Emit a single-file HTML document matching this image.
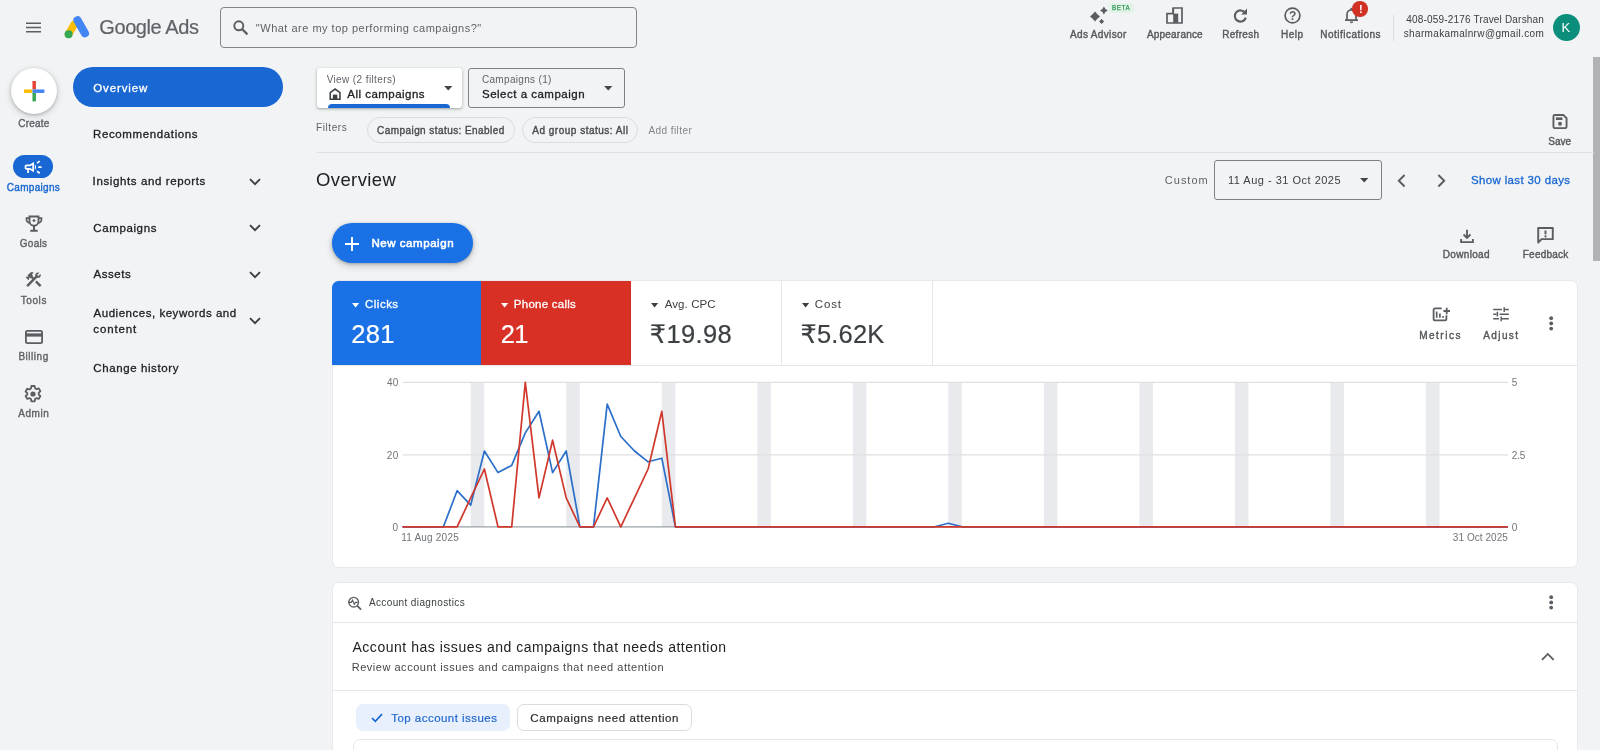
<!DOCTYPE html>
<html lang="en">
<head>
<meta charset="utf-8">
<title>Overview - Google Ads</title>
<style>
*{box-sizing:border-box;margin:0;padding:0}
html,body{width:1600px;height:750px;overflow:hidden;background:#f1f3f4}
body{position:relative;font-family:"Liberation Sans","DejaVu Sans",sans-serif;color:#202124}
.abs{position:absolute}
.t{position:absolute;white-space:nowrap;line-height:1}
svg{position:absolute;overflow:visible}
.chip{border:1px solid #dadce0;border-radius:13px;height:26px;top:117px}
.card{background:#fff;border:1px solid #e7e9ec;border-radius:7px}
.hr{height:1px;background:#e4e6e9}
</style>
</head>
<body>

<!-- ================= HEADER ================= -->
<svg style="left:26.100px;top:22px" width="15" height="11" viewBox="0 0 15 11"><path d="M0 1.250h15M0 5.500h15M0 9.800h15" stroke="#5a5d61" stroke-width="1.450" fill="none"/></svg>
<svg style="left:63px;top:15px" width="28" height="24" viewBox="0 0 28 24">
  <path d="M5.600 19.200 L11.400 9.200" stroke="#fbbc04" stroke-width="7.600" stroke-linecap="round"/>
  <path d="M14.500 5.300 L21.900 18.200" stroke="#4285f4" stroke-width="8.200" stroke-linecap="round"/>
  <circle cx="5.600" cy="19.300" r="4" fill="#34a853"/>
</svg>
<div class="abs" style="left:220px;top:7px;width:417px;height:41px;border:1px solid #80868b;border-radius:4px"></div>
<svg style="left:233px;top:20px" width="16" height="16" viewBox="0 0 16 16"><circle cx="5.800" cy="5.800" r="4.500" stroke="#5a5d61" stroke-width="1.900" fill="none"/><path d="M9.300 9.300L14.400 14.400" stroke="#5a5d61" stroke-width="2.200"/></svg>

<!-- header right icons -->
<svg style="left:1089px;top:7px" width="19" height="18" viewBox="0 0 19 18">
  <path d="M6 4.5Q8.1 7.4 11 9.5Q8.1 11.6 6 14.5Q3.9 11.6 1 9.5Q3.9 7.4 6 4.5Z" fill="#5a5d61"/>
  <path d="M14.9 -0.3999999999999999Q15.9 2.5 18.8 3.5Q15.9 4.5 14.9 7.4Q13.9 4.5 11.0 3.5Q13.9 2.5 14.9 -0.3999999999999999Z" fill="#5a5d61"/>
  <path d="M12.6 11.8Q13.7 13.3 15.2 14.4Q13.7 15.5 12.6 17.0Q11.5 15.5 10.0 14.4Q11.5 13.3 12.6 11.8Z" fill="#5a5d61"/>
</svg>
<div class="abs" style="left:1109px;top:2.500px;width:24.500px;height:10px;background:#e4f3e8;border-radius:3px"></div>
<div class="t" style="left:1112.300px;top:4.600px;font-size:6.300px;will-change:transform;color:#2f9855;letter-spacing:0.600px;-webkit-text-stroke-width:0.250px">BETA</div>
<svg style="left:1166px;top:7px" width="17" height="17" viewBox="0 0 17 17">
  <path d="M7.200 1h8.800v15H1V6.600h6.200z" fill="none" stroke="#5a5d61" stroke-width="1.700"/>
  <path d="M7.200 6.600h5V16H7.200z" fill="#5a5d61"/><path d="M7.200 1v6" stroke="#5a5d61" stroke-width="1.700"/>
</svg>
<svg style="left:1233px;top:8px" width="15" height="15" viewBox="0 0 15 15">
  <path d="M12.300 5.200 A5.600 5.600 0 1 0 12.800 9.600" fill="none" stroke="#5a5d61" stroke-width="2.100"/>
  <path d="M14 0.600V6.400H8.200z" fill="#5a5d61"/>
</svg>
<svg style="left:1284.200px;top:7.200px" width="17" height="17" viewBox="0 0 17 17">
  <circle cx="8.500" cy="8.500" r="7.400" fill="none" stroke="#5a5d61" stroke-width="1.700"/>
</svg>
<div class="t" style="left:1289px;top:9.500px;font-size:12px;font-weight:bold;will-change:transform;color:#5a5d61">?</div>
<svg style="left:1343.500px;top:7.100px" width="15" height="17" viewBox="0 0 15 17">
  <path d="M1 13.200h13M3 13V7.400a4.500 4.500 0 0 1 9 0V13" fill="none" stroke="#5a5d61" stroke-width="1.700"/>
  <path d="M5.800 14.600h3.400a1.700 1.700 0 0 1-3.400 0z" fill="#5a5d61"/><circle cx="7.500" cy="1.900" r="1.200" fill="#5a5d61"/>
</svg>
<div class="abs" style="left:1352.300px;top:1.400px;width:15.600px;height:15.600px;border-radius:50%;background:#d03124"></div>
<div class="t" style="left:1358.500px;top:3.600px;font-size:11px;font-weight:bold;will-change:transform;color:#fff">!</div>
<div class="abs" style="left:1392.500px;top:15px;width:1px;height:26px;background:#dadce0"></div>
<div class="abs" style="left:1553px;top:13.700px;width:27.200px;height:27.200px;border-radius:50%;background:#0b8f7c"></div>
<!-- scrollbar -->
<div class="abs" style="left:1593.200px;top:57px;width:7px;height:204px;background:#b0b2b4"></div>

<!-- ================= LEFT RAIL ================= -->
<div class="abs" style="left:10.800px;top:67.600px;width:46.600px;height:46.600px;border-radius:50%;background:#fff;box-shadow:0 1px 3px rgba(60,64,67,.3),0 2px 6px 1px rgba(60,64,67,.15)"></div>
<svg style="left:23.800px;top:80.600px" width="20.400" height="20.400" viewBox="0 0 20 20">
  <path d="M8.300 0h3.400v8.300H8.300z" fill="#ea4335"/><path d="M0 8.300h8.300v3.400H0z" fill="#fbbc04"/>
  <path d="M8.300 11.700h3.400V20H8.300z" fill="#34a853"/><path d="M8.300 8.300H20v3.400H8.300z" fill="#4285f4"/>
</svg>
<div class="abs" style="left:12.800px;top:155px;width:40.600px;height:23.200px;border-radius:12px;background:#1967d2"></div>
<svg style="left:23.200px;top:156.600px" width="20.300" height="20.300" viewBox="0 0 24 24"><path fill="#fff" d="M18 11v2h4v-2h-4zm-2 6.610c.96.710 2.210 1.650 3.200 2.390.4-.53.8-1.070 1.200-1.600-.99-.74-2.240-1.680-3.200-2.400-.4.540-.8 1.080-1.200 1.610zM20.400 5.600c-.4-.53-.8-1.070-1.200-1.600-.99.740-2.240 1.680-3.200 2.400.4.530.8 1.070 1.200 1.600.96-.72 2.210-1.650 3.200-2.400zM4 9c-1.100 0-2 .9-2 2v2c0 1.100.9 2 2 2h1v4h2v-4h1l5 3V6L8 9H4zm5.030 1.710L11 9.530v4.940l-1.970-1.180-.48-.29H4v-2h4.550l.48-.29zM15.500 12c0-1.330-.58-2.530-1.500-3.350v6.690c.92-.81 1.500-2.010 1.500-3.340z"/></svg>
<svg style="left:24.700px;top:214.800px" width="18" height="17.500" viewBox="0 0 18 17.500">
  <path d="M4.500 1.500h9v4.700a4.500 4.500 0 0 1-9 0z" fill="none" stroke="#5a5d61" stroke-width="1.900"/>
  <path d="M4.500 3.200H1.500v1.300a3.500 3.500 0 0 0 3.600 3.500M13.500 3.200h3v1.300a3.500 3.500 0 0 1-3.600 3.500" fill="none" stroke="#5a5d61" stroke-width="1.700"/>
  <path d="M9 10.800v4M5.300 15.800h7.400" stroke="#5a5d61" stroke-width="2"/>
  <circle cx="9" cy="5.600" r="1.400" fill="#5a5d61"/>
</svg>
<svg style="left:24.300px;top:270px" width="19.200" height="19.200" viewBox="0 0 24 24"><path fill="#5a5d61" d="M13.783 15.172l2.121-2.121 5.996 5.996-2.121 2.121zM17.500 10c1.930 0 3.500-1.570 3.500-3.500 0-.58-.16-1.120-.41-1.600l-2.700 2.700-1.490-1.490 2.700-2.700c-.48-.25-1.020-.41-1.600-.41C15.570 3 14 4.570 14 6.500c0 .41.080.8.210 1.160l-1.850 1.850-1.780-1.780.71-.71-1.410-1.410L12 3.490c-1.170-1.170-3.070-1.170-4.240 0L4.220 7.030l1.410 1.410H2.810l-.71.710 3.540 3.540.71-.71V9.150l1.410 1.410.71-.71 1.780 1.780-7.410 7.410 2.120 2.120L16.340 9.790c.36.130.75.210 1.160.210z"/></svg>
<svg style="left:24.500px;top:330px" width="18" height="14" viewBox="0 0 18 14">
  <rect x="0.900" y="0.900" width="16.200" height="12.200" rx="1.600" fill="none" stroke="#5a5d61" stroke-width="1.800"/>
  <path d="M1 3.400h16v3.200H1z" fill="#5a5d61"/>
</svg>
<svg style="left:24.300px;top:385px" width="18" height="18" viewBox="0 0 18 18">
  <path d="M7.400 1h3.200l.5 2.300 1.500.9 2.200-.8 1.600 2.800-1.700 1.600v1.700l1.700 1.600-1.600 2.800-2.200-.8-1.500.9-.5 2.300H7.400l-.5-2.300-1.500-.9-2.200.8-1.600-2.800 1.700-1.600V8.100L1.600 6.500l1.600-2.800 2.200.8 1.500-.9z" fill="none" stroke="#5a5d61" stroke-width="1.800" stroke-linejoin="round"/>
  <circle cx="9" cy="9" r="2.600" fill="#5a5d61"/>
</svg>

<!-- ================= SECOND NAV ================= -->
<div class="abs" style="left:72.800px;top:67.200px;width:210.700px;height:40px;border-radius:20px;background:#1967d2"></div>
<svg style="left:248.700px;top:177.500px" width="12" height="8" viewBox="0 0 12 8"><path d="M1 1.200l5 5 5-5" fill="none" stroke="#3c4043" stroke-width="1.900"/></svg>
<svg style="left:248.700px;top:224px" width="12" height="8" viewBox="0 0 12 8"><path d="M1 1.200l5 5 5-5" fill="none" stroke="#3c4043" stroke-width="1.900"/></svg>
<svg style="left:248.700px;top:270.500px" width="12" height="8" viewBox="0 0 12 8"><path d="M1 1.200l5 5 5-5" fill="none" stroke="#3c4043" stroke-width="1.900"/></svg>
<svg style="left:248.700px;top:317px" width="12" height="8" viewBox="0 0 12 8"><path d="M1 1.200l5 5 5-5" fill="none" stroke="#3c4043" stroke-width="1.900"/></svg>

<!-- ================= MAIN ================= -->
<div class="abs" style="left:317px;top:67.500px;width:144.800px;height:40px;background:#fff;border-radius:3px;box-shadow:0 1px 2px rgba(60,64,67,.3),0 1px 3px 1px rgba(60,64,67,.12);overflow:hidden">
  <div class="abs" style="left:11px;top:36.300px;width:122px;height:8px;border-radius:4px;background:#1967d2"></div>
</div>
<svg style="left:329.400px;top:88px" width="12.200" height="12.200" viewBox="0 0 12 12"><path d="M1.200 11V4.600L6 1l4.800 3.600V11H1.200z" fill="none" stroke="#3c4043" stroke-width="1.500"/><path d="M3.800 6.500h4.400V11H3.800z" fill="#3c4043"/></svg>
<svg style="left:444px;top:85.500px" width="8.500" height="4.600" viewBox="0 0 9 5"><path d="M0 0h9L4.500 5z" fill="#444746"/></svg>
<div class="abs" style="left:468px;top:67.500px;width:156.800px;height:40px;border:1px solid #7d8186;border-radius:3px"></div>
<svg style="left:603.600px;top:85.500px" width="8.500" height="4.600" viewBox="0 0 9 5"><path d="M0 0h9L4.500 5z" fill="#444746"/></svg>
<div class="abs chip" style="left:367px;width:148px"></div>
<div class="abs chip" style="left:521.800px;width:116px"></div>
<svg style="left:1552px;top:114px" width="16" height="15" viewBox="0 0 16 16"><path d="M1 2.500A1.500 1.500 0 0 1 2.500 1h9L15 4.500v9a1.500 1.500 0 0 1-1.500 1.500h-11A1.500 1.500 0 0 1 1 13.500z" fill="none" stroke="#5a5d61" stroke-width="2"/><path d="M3.600 3.600h7v2.800h-7z" fill="#5a5d61"/><circle cx="8" cy="10.400" r="2.100" fill="#5a5d61"/></svg>
<div class="abs" style="left:317px;top:151.500px;width:1276.500px;height:1.300px;background:#dfe1e4"></div>
<div class="abs" style="left:1214px;top:160px;width:168px;height:39.700px;border:1px solid #7d8186;border-radius:3px"></div>
<svg style="left:1360.200px;top:178.400px" width="8.400" height="4.600" viewBox="0 0 9 5"><path d="M0 0h9L4.500 5z" fill="#444746"/></svg>
<svg style="left:1397.300px;top:173.500px" width="9" height="13.500" viewBox="0 0 9 14"><path d="M7.700 1L1.700 7l6 6" fill="none" stroke="#5a5d61" stroke-width="2"/></svg>
<svg style="left:1437.300px;top:173.500px" width="9" height="13.500" viewBox="0 0 9 14"><path d="M1.300 1l6 6-6 6" fill="none" stroke="#5a5d61" stroke-width="2"/></svg>
<div class="abs" style="left:331.800px;top:223.200px;width:141.500px;height:39.800px;border-radius:20px;background:#1a71e6;box-shadow:0 1px 3px rgba(60,64,67,.35),0 3px 6px 1px rgba(60,64,67,.18)"></div>
<svg style="left:344.600px;top:236.700px" width="14" height="14" viewBox="0 0 14 14"><path d="M7 0v14M0 7h14" stroke="#fff" stroke-width="1.900"/></svg>
<svg style="left:1459.800px;top:228.500px" width="14" height="14.500" viewBox="0 0 15 15"><path d="M7.500 0.500v8.500M3.800 5.600l3.700 3.700 3.700-3.700M1.200 10.500v3.300h12.600v-3.300" fill="none" stroke="#5a5d61" stroke-width="2"/></svg>
<svg style="left:1537.300px;top:227px" width="17" height="16.500" viewBox="0 0 17 17"><path d="M1 1h15v11.500H4.500L1 16z" fill="none" stroke="#5a5d61" stroke-width="2" stroke-linejoin="round"/><path d="M8.500 3.600v4" stroke="#5a5d61" stroke-width="2"/><circle cx="8.500" cy="9.700" r="1.100" fill="#5a5d61"/></svg>

<!-- ====== chart card ====== -->
<div class="abs card" style="left:332px;top:280.300px;width:1245.800px;height:287.700px"></div>
<div class="abs" style="left:332.400px;top:280.900px;width:148.600px;height:84px;background:#1a71e6;border-radius:6.500px 0 0 0"></div>
<div class="abs" style="left:481px;top:280.900px;width:150px;height:84px;background:#d83025"></div>
<div class="abs" style="left:781px;top:281px;width:1px;height:84px;background:#e4e6e9"></div>
<div class="abs" style="left:932px;top:281px;width:1px;height:84px;background:#e4e6e9"></div>
<div class="abs hr" style="left:333px;top:364.700px;width:1244px"></div>
<svg style="left:351.8px;top:302.500px" width="7.200" height="4.500" viewBox="0 0 8 5"><path d="M0 0h8L4 5z" fill="#fff"/></svg>
<svg style="left:501.3px;top:302.500px" width="7.200" height="4.500" viewBox="0 0 8 5"><path d="M0 0h8L4 5z" fill="#fff"/></svg>
<svg style="left:650.8px;top:302.500px" width="7.200" height="4.500" viewBox="0 0 8 5"><path d="M0 0h8L4 5z" fill="#3c4043"/></svg>
<svg style="left:801.6px;top:302.500px" width="7.200" height="4.500" viewBox="0 0 8 5"><path d="M0 0h8L4 5z" fill="#3c4043"/></svg>
<svg style="left:1431.500px;top:306px" width="18.500" height="16" viewBox="0 0 18.500 16"><path d="M9.700 2.400H3a1.400 1.400 0 0 0-1.400 1.400v9.200a1.400 1.400 0 0 0 1.400 1.400h10a1.400 1.400 0 0 0 1.400-1.400V9.200" fill="none" stroke="#5a5d61" stroke-width="1.800"/><path d="M4.700 5.600v6.200M7.900 7.600v4.200M11.100 10v1.800" stroke="#5a5d61" stroke-width="1.700"/><path d="M14.700 1.700v6.600M11.400 5h6.600" stroke="#5a5d61" stroke-width="1.800"/></svg>
<svg style="left:1493px;top:307px" width="16" height="14.500" viewBox="0 0 16 14.500"><path d="M0.200 2.600h8.800M12 2.600h3.800M0.200 7.200h3.400M6.600 7.200h9.200M0.200 11.800h5.800M9 11.800h6.800" stroke="#5a5d61" stroke-width="1.500"/><path d="M11.200 0.200v4.800M4.400 4.800v4.800M8.200 9.400v4.800" stroke="#5a5d61" stroke-width="1.500"/></svg>
<svg style="left:1548.800px;top:316.400px" width="4.400" height="14.800" viewBox="0 0 4.400 14.800"><circle cx="2.200" cy="2.200" r="1.900" fill="#5a5d61"/><circle cx="2.200" cy="7.400" r="1.900" fill="#5a5d61"/><circle cx="2.200" cy="12.600" r="1.900" fill="#5a5d61"/></svg>
<svg class="abs" style="left:0;top:0" width="1600" height="750" viewBox="0 0 1600 750">
  <rect x="470.7" y="382.4" width="13.6" height="144.4" fill="#e8eaed"/><rect x="566.2" y="382.4" width="13.6" height="144.4" fill="#e8eaed"/><rect x="661.8" y="382.4" width="13.6" height="144.4" fill="#e8eaed"/><rect x="757.3" y="382.4" width="13.6" height="144.4" fill="#e8eaed"/><rect x="852.8" y="382.4" width="13.6" height="144.4" fill="#e8eaed"/><rect x="948.3" y="382.4" width="13.6" height="144.4" fill="#e8eaed"/><rect x="1043.8" y="382.4" width="13.6" height="144.4" fill="#e8eaed"/><rect x="1139.4" y="382.4" width="13.6" height="144.4" fill="#e8eaed"/><rect x="1234.9" y="382.4" width="13.6" height="144.4" fill="#e8eaed"/><rect x="1330.4" y="382.4" width="13.6" height="144.4" fill="#e8eaed"/><rect x="1425.9" y="382.4" width="13.6" height="144.4" fill="#e8eaed"/>
  <path d="M403 382.4H1508M403 454.800H1508" stroke="#e0e0e0" stroke-width="1.2" fill="none"/>
  <path d="M403 526.800H1508" stroke="#9aa0a6" stroke-width="1.2" fill="none"/>
  <polyline points="402.5,526.8 416.1,526.8 429.8,526.8 443.4,526.8 457.1,490.7 470.7,505.1 484.4,451.0 498.0,472.6 511.7,465.4 525.3,432.9 539.0,411.3 552.6,472.6 566.2,451.0 579.9,526.8 593.5,526.8 607.2,404.1 620.8,436.5 634.5,451.0 648.1,461.8 661.8,458.2 675.4,526.8 689.1,526.8 702.7,526.8 716.4,526.8 730.0,526.8 743.6,526.8 757.3,526.8 770.9,526.8 784.6,526.8 798.2,526.8 811.9,526.8 825.5,526.8 839.2,526.8 852.8,526.8 866.5,526.8 880.1,526.8 893.7,526.8 907.4,526.8 921.0,526.8 934.7,526.8 948.3,523.2 962.0,526.8 975.6,526.8 989.3,526.8 1002.9,526.8 1016.6,526.8 1030.2,526.8 1043.8,526.8 1057.5,526.8 1071.1,526.8 1084.8,526.8 1098.4,526.8 1112.1,526.8 1125.7,526.8 1139.4,526.8 1153.0,526.8 1166.7,526.8 1180.3,526.8 1193.9,526.8 1207.6,526.8 1221.2,526.8 1234.9,526.8 1248.5,526.8 1262.2,526.8 1275.8,526.8 1289.5,526.8 1303.1,526.8 1316.8,526.8 1330.4,526.8 1344.1,526.8 1357.7,526.8 1371.3,526.8 1385.0,526.8 1398.6,526.8 1412.3,526.8 1425.9,526.8 1439.6,526.8 1453.2,526.8 1466.9,526.8 1480.5,526.8 1494.2,526.8 1507.8,526.8" fill="none" stroke="#2b6fc9" stroke-width="1.7" stroke-linejoin="round"/>
  <polyline points="402.5,526.8 416.1,526.8 429.8,526.8 443.4,526.8 457.1,526.8 470.7,497.9 484.4,469.0 498.0,526.8 511.7,526.8 525.3,382.4 539.0,497.9 552.6,440.2 566.2,497.9 579.9,526.8 593.5,526.8 607.2,497.9 620.8,526.8 634.5,497.9 648.1,469.0 661.8,411.3 675.4,526.8 689.1,526.8 702.7,526.8 716.4,526.8 730.0,526.8 743.6,526.8 757.3,526.8 770.9,526.8 784.6,526.8 798.2,526.8 811.9,526.8 825.5,526.8 839.2,526.8 852.8,526.8 866.5,526.8 880.1,526.8 893.7,526.8 907.4,526.8 921.0,526.8 934.7,526.8 948.3,526.8 962.0,526.8 975.6,526.8 989.3,526.8 1002.9,526.8 1016.6,526.8 1030.2,526.8 1043.8,526.8 1057.5,526.8 1071.1,526.8 1084.8,526.8 1098.4,526.8 1112.1,526.8 1125.7,526.8 1139.4,526.8 1153.0,526.8 1166.7,526.8 1180.3,526.8 1193.9,526.8 1207.6,526.8 1221.2,526.8 1234.9,526.8 1248.5,526.8 1262.2,526.8 1275.8,526.8 1289.5,526.8 1303.1,526.8 1316.8,526.8 1330.4,526.8 1344.1,526.8 1357.7,526.8 1371.3,526.8 1385.0,526.8 1398.6,526.8 1412.3,526.8 1425.9,526.8 1439.6,526.8 1453.2,526.8 1466.9,526.8 1480.5,526.8 1494.2,526.8 1507.8,526.8" fill="none" stroke="#d0382d" stroke-width="1.7" stroke-linejoin="round"/>
</svg>

<!-- ====== diagnostics card ====== -->
<div class="abs card" style="left:332px;top:582.400px;width:1245.800px;height:200px;border-radius:7px 7px 0 0"></div>
<svg style="left:346.800px;top:596px" width="15.500" height="14.500" viewBox="0 0 15 15"><circle cx="6.400" cy="6.400" r="5" fill="none" stroke="#5a5d61" stroke-width="1.400"/><path d="M10 10l4 4" stroke="#5a5d61" stroke-width="1.800"/><path d="M0.500 6.600h3.500l1.200-2.400 1.800 4.400 1.200-2h2.300" fill="none" stroke="#5a5d61" stroke-width="1.200"/></svg>
<svg style="left:1548.900px;top:595.300px" width="4.400" height="14.800" viewBox="0 0 4.400 14.800"><circle cx="2.200" cy="2.200" r="1.900" fill="#5a5d61"/><circle cx="2.200" cy="7.400" r="1.900" fill="#5a5d61"/><circle cx="2.200" cy="12.600" r="1.900" fill="#5a5d61"/></svg>
<div class="abs hr" style="left:333px;top:621.600px;width:1244px"></div>
<svg style="left:1541.200px;top:651.800px" width="13.600" height="8.800" viewBox="0 0 14 9"><path d="M1 8l6-6 6 6" fill="none" stroke="#5a5d61" stroke-width="1.900"/></svg>
<div class="abs hr" style="left:333px;top:690px;width:1244px"></div>
<div class="abs" style="left:356px;top:704.400px;width:154px;height:26.200px;border-radius:7px;background:#e8f0fe"></div>
<svg style="left:371.300px;top:713.200px" width="12" height="9.500" viewBox="0 0 12 9.500"><path d="M1 5l3.300 3.300L11 1.200" fill="none" stroke="#1967d2" stroke-width="1.700"/></svg>
<div class="abs" style="left:517px;top:704.400px;width:174.600px;height:26.200px;border-radius:7px;border:1px solid #dadce0;background:#fff"></div>
<div class="abs" style="left:352.600px;top:738.800px;width:1205px;height:30px;border:1px solid #e4e6e9;border-radius:7px"></div>

<!-- ================= TEXT ================= -->
<div id="txt" style="position:absolute;left:0;top:0;width:1600px;height:750px;will-change:transform">
<div class="t" style="left:99.27px;top:17.00px;font-size:20px;color:#5f6368;letter-spacing:-0.410px;-webkit-text-stroke-width:0.2px;">Google Ads</div>
<div class="t" style="left:255.86px;top:23.00px;font-size:11px;color:#5f6368;letter-spacing:0.496px;">"What are my top performing campaigns?"</div>
<div class="t" style="left:1070.02px;top:30.00px;font-size:10px;color:#54585c;letter-spacing:0.341px;-webkit-text-stroke-width:0.38px;">Ads Advisor</div>
<div class="t" style="left:1146.92px;top:30.00px;font-size:10px;color:#54585c;letter-spacing:0.205px;-webkit-text-stroke-width:0.38px;">Appearance</div>
<div class="t" style="left:1222.20px;top:30.00px;font-size:10px;color:#54585c;letter-spacing:0.304px;-webkit-text-stroke-width:0.38px;">Refresh</div>
<div class="t" style="left:1281.00px;top:30.00px;font-size:10px;color:#54585c;letter-spacing:0.500px;-webkit-text-stroke-width:0.38px;">Help</div>
<div class="t" style="left:1320.31px;top:30.00px;font-size:10px;color:#54585c;letter-spacing:0.474px;-webkit-text-stroke-width:0.38px;">Notifications</div>
<div class="t" style="left:1406.28px;top:15.00px;font-size:10px;color:#3c4043;letter-spacing:0.182px;">408-059-2176 Travel Darshan</div>
<div class="t" style="left:1403.72px;top:29.00px;font-size:10px;color:#3c4043;letter-spacing:0.360px;">sharmakamalnrw@gmail.com</div>
<div class="t" style="left:1561.57px;top:21.00px;font-size:13px;color:#fff;letter-spacing:0.000px;">K</div>
<div class="t" style="left:18.32px;top:119.00px;font-size:10px;color:#5f6368;letter-spacing:0.197px;-webkit-text-stroke-width:0.38px;">Create</div>
<div class="t" style="left:6.77px;top:183.00px;font-size:10px;color:#1967d2;letter-spacing:0.311px;-webkit-text-stroke-width:0.38px;">Campaigns</div>
<div class="t" style="left:19.81px;top:239.00px;font-size:10px;color:#5f6368;letter-spacing:0.262px;-webkit-text-stroke-width:0.38px;">Goals</div>
<div class="t" style="left:20.70px;top:296.00px;font-size:10px;color:#5f6368;letter-spacing:0.597px;-webkit-text-stroke-width:0.38px;">Tools</div>
<div class="t" style="left:18.40px;top:352.00px;font-size:10px;color:#5f6368;letter-spacing:0.521px;-webkit-text-stroke-width:0.38px;">Billing</div>
<div class="t" style="left:18.32px;top:409.00px;font-size:10px;color:#5f6368;letter-spacing:0.540px;-webkit-text-stroke-width:0.38px;">Admin</div>
<div class="t" style="left:93.32px;top:83.00px;font-size:11.5px;color:#fff;letter-spacing:0.856px;-webkit-text-stroke-width:0.3px;">Overview</div>
<div class="t" style="left:93.06px;top:129.00px;font-size:11.5px;color:#202124;letter-spacing:0.620px;-webkit-text-stroke-width:0.3px;">Recommendations</div>
<div class="t" style="left:92.62px;top:176.00px;font-size:11.5px;color:#202124;letter-spacing:0.612px;-webkit-text-stroke-width:0.3px;">Insights and reports</div>
<div class="t" style="left:93.31px;top:223.00px;font-size:11.5px;color:#202124;letter-spacing:0.616px;-webkit-text-stroke-width:0.3px;">Campaigns</div>
<div class="t" style="left:93.58px;top:269.00px;font-size:11.5px;color:#202124;letter-spacing:0.530px;-webkit-text-stroke-width:0.3px;">Assets</div>
<div class="t" style="left:93.58px;top:308.00px;font-size:11.5px;color:#202124;letter-spacing:0.522px;-webkit-text-stroke-width:0.3px;">Audiences, keywords and</div>
<div class="t" style="left:93.36px;top:324.00px;font-size:11.5px;color:#202124;letter-spacing:0.859px;-webkit-text-stroke-width:0.3px;">content</div>
<div class="t" style="left:93.31px;top:363.00px;font-size:11.5px;color:#202124;letter-spacing:0.597px;-webkit-text-stroke-width:0.3px;">Change history</div>
<div class="t" style="left:326.64px;top:75.00px;font-size:10px;color:#5f6368;letter-spacing:0.393px;">View (2 filters)</div>
<div class="t" style="left:347.33px;top:89.00px;font-size:11.5px;color:#202124;letter-spacing:0.467px;-webkit-text-stroke-width:0.3px;">All campaigns</div>
<div class="t" style="left:481.92px;top:75.00px;font-size:10px;color:#5f6368;letter-spacing:0.325px;">Campaigns (1)</div>
<div class="t" style="left:481.99px;top:89.00px;font-size:11.5px;color:#202124;letter-spacing:0.499px;-webkit-text-stroke-width:0.3px;">Select a campaign</div>
<div class="t" style="left:315.95px;top:123.00px;font-size:10px;color:#5f6368;letter-spacing:0.605px;">Filters</div>
<div class="t" style="left:377.12px;top:126.00px;font-size:10px;color:#4a4d51;letter-spacing:0.427px;-webkit-text-stroke-width:0.38px;">Campaign status: Enabled</div>
<div class="t" style="left:532.32px;top:126.00px;font-size:10px;color:#4a4d51;letter-spacing:0.495px;-webkit-text-stroke-width:0.38px;">Ad group status: All</div>
<div class="t" style="left:648.40px;top:126.00px;font-size:10px;color:#80868b;letter-spacing:0.442px;">Add filter</div>
<div class="t" style="left:1548.36px;top:137.00px;font-size:10px;color:#54585c;letter-spacing:0.001px;-webkit-text-stroke-width:0.38px;">Save</div>
<div class="t" style="left:315.92px;top:171.00px;font-size:18.5px;color:#202124;letter-spacing:0.415px;">Overview</div>
<div class="t" style="left:1164.87px;top:175.00px;font-size:11px;color:#5f6368;letter-spacing:0.984px;">Custom</div>
<div class="t" style="left:1228.02px;top:175.00px;font-size:11px;color:#3c4043;letter-spacing:0.497px;">11 Aug - 31 Oct 2025</div>
<div class="t" style="left:1470.89px;top:175.00px;font-size:11.5px;color:#1967d2;letter-spacing:0.368px;-webkit-text-stroke-width:0.3px;">Show last 30 days</div>
<div class="t" style="left:371.38px;top:238.00px;font-size:11.5px;color:#fff;letter-spacing:0.556px;-webkit-text-stroke-width:0.55px;">New campaign</div>
<div class="t" style="left:1442.70px;top:250.00px;font-size:10px;color:#54585c;letter-spacing:0.347px;-webkit-text-stroke-width:0.38px;">Download</div>
<div class="t" style="left:1522.80px;top:250.00px;font-size:10px;color:#54585c;letter-spacing:0.210px;-webkit-text-stroke-width:0.38px;">Feedback</div>
<div class="t" style="left:365.06px;top:299.00px;font-size:11.5px;color:#fff;letter-spacing:0.482px;-webkit-text-stroke-width:0.3px;">Clicks</div>
<div class="t" style="left:351.21px;top:322.00px;font-size:25.5px;color:#fff;letter-spacing:0.293px;-webkit-text-stroke-width:0.2px;">281</div>
<div class="t" style="left:513.81px;top:299.00px;font-size:11.5px;color:#fff;letter-spacing:0.262px;-webkit-text-stroke-width:0.3px;">Phone calls</div>
<div class="t" style="left:500.71px;top:322.00px;font-size:25.5px;color:#fff;letter-spacing:-0.665px;-webkit-text-stroke-width:0.2px;">21</div>
<div class="t" style="left:664.68px;top:299.00px;font-size:11.5px;color:#3c4043;letter-spacing:0.099px;">Avg. CPC</div>
<div class="t" style="left:649.83px;top:322.00px;font-size:25.5px;color:#3c4043;letter-spacing:0.363px;-webkit-text-stroke-width:0.2px;">₹19.98</div>
<div class="t" style="left:814.87px;top:299.00px;font-size:11.5px;color:#3c4043;letter-spacing:0.792px;">Cost</div>
<div class="t" style="left:800.58px;top:322.00px;font-size:25.5px;color:#3c4043;letter-spacing:0.163px;-webkit-text-stroke-width:0.2px;">₹5.62K</div>
<div class="t" style="left:1419.16px;top:331.00px;font-size:10px;color:#54585c;letter-spacing:1.500px;-webkit-text-stroke-width:0.38px;">Metrics</div>
<div class="t" style="left:1483.32px;top:331.00px;font-size:10px;color:#54585c;letter-spacing:1.380px;-webkit-text-stroke-width:0.38px;">Adjust</div>
<div class="t" style="left:386.93px;top:378.00px;font-size:10px;color:#70757a;letter-spacing:0.190px;">40</div>
<div class="t" style="left:386.68px;top:451.00px;font-size:10px;color:#70757a;letter-spacing:0.445px;">20</div>
<div class="t" style="left:392.50px;top:523.00px;font-size:10px;color:#70757a;letter-spacing:0.000px;">0</div>
<div class="t" style="left:1511.66px;top:378.00px;font-size:10px;color:#70757a;letter-spacing:0.000px;">5</div>
<div class="t" style="left:1511.73px;top:451.00px;font-size:10px;color:#70757a;letter-spacing:-0.129px;">2.5</div>
<div class="t" style="left:1511.79px;top:523.00px;font-size:10px;color:#70757a;letter-spacing:0.000px;">0</div>
<div class="t" style="left:401.23px;top:533.00px;font-size:10px;color:#70757a;letter-spacing:0.208px;">11 Aug 2025</div>
<div class="t" style="left:1452.79px;top:533.00px;font-size:10px;color:#70757a;letter-spacing:0.066px;">31 Oct 2025</div>
<div class="t" style="left:368.95px;top:598.00px;font-size:10px;color:#3c4043;letter-spacing:0.376px;">Account diagnostics</div>
<div class="t" style="left:352.48px;top:640.00px;font-size:14px;color:#202124;letter-spacing:0.524px;">Account has issues and campaigns that needs attention</div>
<div class="t" style="left:351.71px;top:662.00px;font-size:11px;color:#444746;letter-spacing:0.522px;">Review account issues and campaigns that need attention</div>
<div class="t" style="left:391.25px;top:713.00px;font-size:11.5px;color:#1f66cc;letter-spacing:0.465px;-webkit-text-stroke-width:0.2px;">Top account issues</div>
<div class="t" style="left:530.37px;top:713.00px;font-size:11.5px;color:#2a2d31;letter-spacing:0.603px;-webkit-text-stroke-width:0.2px;">Campaigns need attention</div>
</div>

</body>
</html>
